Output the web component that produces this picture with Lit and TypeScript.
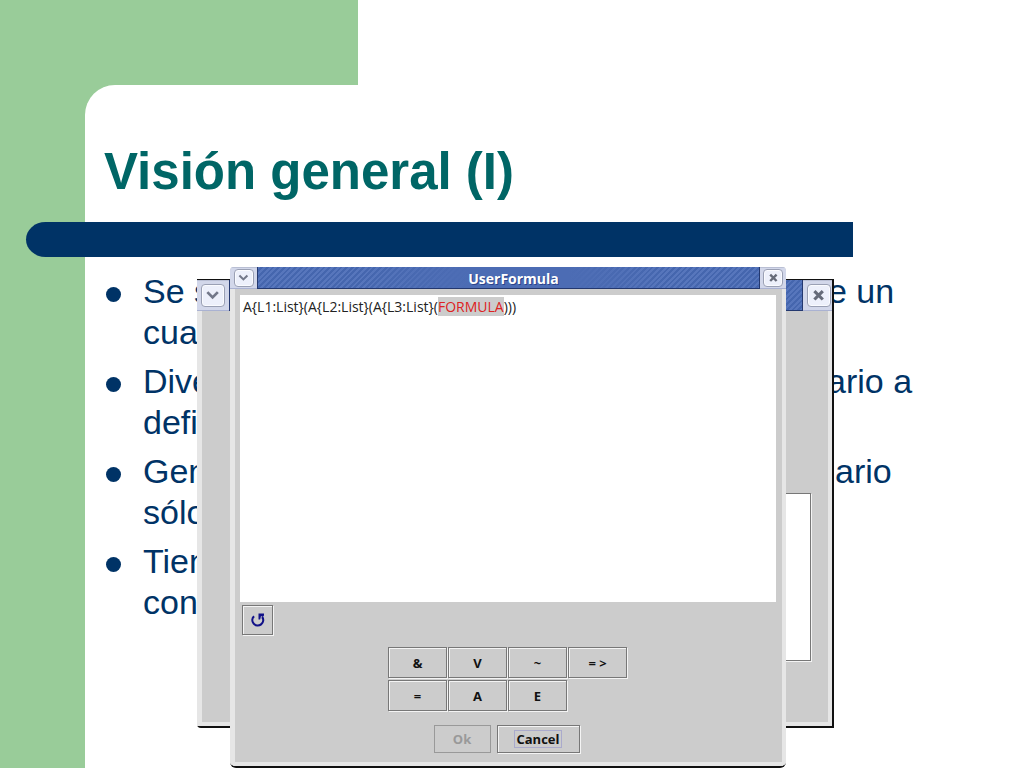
import { LitElement, html, css, svg } from "lit";
import { customElement, property } from "lit/decorators.js";

interface Point {
  start: string;
  gap: number;
  end: string;
  second: string;
}

const POINTS: Point[] = [
  { start: "Se s", gap: 685, end: "e un", second: "cua" },
  { start: "Dive", gap: 684, end: "ario a", second: "defi" },
  { start: "Gen", gap: 692, end: "ario", second: "sólo" },
  { start: "Tien", gap: 685, end: "", second: "con" },
];

const SYMBOLS = ["&", "V", "~", "= >", "=", "A", "E"];

@customElement("window-frame")
export class WindowFrame extends LitElement {
  @property() caption = "";

  static styles = css`
    :host {
      display: flex;
      flex-direction: column;
      box-sizing: border-box;
      background: #cccccc;
      font-family: "Open Sans", "Noto Sans", sans-serif;
    }
    .bar {
      display: flex;
      align-items: stretch;
      height: var(--bar-height, 22px);
      background: #d2d7ea;
      box-shadow: inset 0 1px #b9bfd4, inset 0 -1px #aab2d2;
    }
    .corner {
      display: flex;
      align-items: center;
      justify-content: center;
      width: var(--corner-width, 27px);
    }
    .corner.right {
      justify-content: flex-end;
      box-sizing: border-box;
      padding-right: var(--corner-inset, 3px);
      width: var(--right-width, 26px);
    }
    .control {
      display: flex;
      align-items: center;
      justify-content: center;
      width: var(--control-width, 20px);
      height: var(--control-height, 18px);
      padding: 0;
      border: 1px solid #9aa0b4;
      border-radius: 4px;
      background: #edf0fb;
      box-shadow: inset 0 0 0 1px #fafbff;
    }
    .control svg {
      width: 60%;
      height: 60%;
    }
    .title {
      flex: 1;
      margin: 0;
      padding-left: 10px;
      text-align: center;
      color: #ffffff;
      font-size: 14px;
      line-height: 23px;
      font-weight: 700;
      text-shadow: 1px 1px #2c448c;
      border: solid #24386f;
      border-width: 0 1px 1px;
      background:
        linear-gradient(90deg, transparent 20%, #4c6cb4 42%, #4c6cb4 62%, transparent 82%),
        repeating-linear-gradient(135deg, #5776bc 0 2px, #4566ae 2px 4px);
      box-sizing: border-box;
    }
    .body {
      flex: 1;
      display: flex;
      flex-direction: column;
      border: solid #e6e6e6;
      border-width: 0 4px 4px 5px;
    }
  `;

  render() {
    return html`
      <div class="bar">
        <div class="corner">
          <button class="control" aria-label="Menu">
            ${svg`<svg viewBox="0 0 12 12" fill="none" stroke="#73788a" stroke-width="2.6"><path d="M1 3l5 5 5-5"/></svg>`}
          </button>
        </div>
        <h2 class="title">${this.caption}</h2>
        <div class="corner right">
          <button class="control" aria-label="Close">
            ${svg`<svg viewBox="0 0 12 12" fill="none" stroke="#666b7a" stroke-width="3"><path d="M2 2l8 8M10 2l-8 8"/></svg>`}
          </button>
        </div>
      </div>
      <div class="body"><slot></slot></div>
    `;
  }
}

@customElement("app-root")
export class AppRoot extends LitElement {
  static styles = css`
    :host {
      display: block;
      font-family: "Liberation Sans", Arial, sans-serif;
      color: #003366;
    }
    .slide {
      position: relative;
      display: flex;
      flex-direction: column;
      min-height: 100vh;
      overflow: hidden;
      background: linear-gradient(90deg, #99cc99 120px, #ffffff 120px);
    }
    .band {
      width: 35%;
      height: 85px;
      background: #99cc99;
    }
    .panel {
      flex: 1;
      margin-left: 85px;
      background: #ffffff;
      border-radius: 30px 0 0 0;
    }
    .heading {
      margin: 0;
      padding: 57px 0 20px 19px;
      font-size: 51px;
      line-height: 60px;
      font-weight: 700;
      color: #006666;
    }
    .rule {
      height: 35px;
      margin: 0 calc(100vw / 6) 0 -59px;
      border-radius: 20px 0 0 20px / 18px 0 0 18px;
      background: #003366;
    }
    .points {
      display: flex;
      flex-direction: column;
      gap: 8px;
      margin: 0;
      padding: 14px 0 0 21px;
      list-style: none;
      font-size: 34px;
      line-height: 41px;
    }
    .point {
      display: flex;
      align-items: flex-start;
      gap: 22px;
    }
    .dot {
      width: 15px;
      height: 15px;
      margin-top: 16px;
      border-radius: 50%;
      background: #003366;
    }
    .line {
      display: flex;
      white-space: nowrap;
    }
    .start {
      flex: none;
    }
    .back,
    .front {
      position: absolute;
    }
    .back {
      left: 197px;
      top: 279px;
      width: 637px;
      height: 449px;
      border: solid #111111;
      border-width: 1px 2px 2px 0;
      border-radius: 0 0 0 4px;
      --bar-height: 31px;
      --corner-width: 32px;
      --right-width: 29px;
      --corner-inset: 1px;
      --control-width: 24px;
      --control-height: 23px;
    }
    .front {
      left: 230px;
      top: 267px;
      width: 556px;
      border-bottom: 2px solid #111111;
      border-radius: 4px 4px 6px 6px;
      overflow: hidden;
    }
    .list {
      margin: 182px 17px 0 30px;
      height: 166px;
      border: 1px solid #777777;
      background: #ffffff;
      box-shadow: 1px 1px #f4f4f4;
    }
    .editor {
      margin: 6px 6px 0 5px;
      height: 307px;
      box-sizing: border-box;
      padding: 4px 3px;
      background: #ffffff;
      color: #222222;
      font-size: 14px;
      line-height: 16px;
      outline: none;
    }
    .chosen {
      background: #cccccc;
      color: #dd2222;
    }
    .tools {
      padding: 3px 7px 12px;
    }
    .key {
      display: flex;
      align-items: center;
      justify-content: center;
      padding: 0;
      border: 1px solid #777777;
      background: #cccccc;
      box-shadow: 1px 1px #f4f4f4, inset 1px 1px #f4f4f4;
      color: #111111;
      font-family: "Open Sans", "Noto Sans", sans-serif;
      font-size: 13px;
      line-height: 16px;
      font-weight: 700;
    }
    .undo {
      width: 31px;
      height: 30px;
    }
    .keys {
      display: grid;
      grid-template-columns: repeat(4, 59px);
      grid-auto-rows: 31px;
      gap: 2px 1px;
      justify-content: center;
      padding-right: 2px;
    }
    .actions {
      display: flex;
      justify-content: center;
      gap: 6px;
      padding: 14px 4px 9px 0;
    }
    .action {
      height: 28px;
    }
    .ok {
      width: 57px;
      color: #999999;
      border-color: #999999;
      box-shadow: none;
    }
    .cancel {
      width: 83px;
    }
    .focus {
      border: 1px solid #aaaacc;
      padding: 0 1px;
    }
  `;

  render() {
    return html`
      <main class="slide">
        <div class="band"></div>
        <section class="panel">
          <h1 class="heading">Visión general (I)</h1>
          <div class="rule"></div>
          <ul class="points">
            ${POINTS.map(
              (p) => html`
                <li class="point">
                  <span class="dot"></span>
                  <div>
                    <div class="line">
                      <span class="start" style="width:${p.gap}px">${p.start}</span>
                      <span>${p.end}</span>
                    </div>
                    <div class="line">${p.second}</div>
                  </div>
                </li>
              `
            )}
          </ul>
        </section>

        <window-frame class="back">
          <div class="list"></div>
        </window-frame>

        <window-frame class="front" caption="UserFormula">
          <div class="editor" contenteditable="true" role="textbox" aria-label="Formula" spellcheck="false">A{L1:List}(A{L2:List}(A{L3:List}(<span class="chosen">FORMULA</span>)))</div>
          <div class="tools">
            <button class="key undo" aria-label="Undo">
              <svg width="16" height="16" viewBox="0 0 16 16" fill="none" stroke="#111188" stroke-width="2.2">
                <path d="M4 4.2A5.4 5.4 0 1 0 12.2 5" />
                <path d="M8.5 1.5h5.5v2l-1.5 1.5-1.5-1-.8 3.5h-1.7z" fill="#111188" stroke="none" />
              </svg>
            </button>
          </div>
          <div class="keys">
            ${SYMBOLS.map((s) => html`<button class="key">${s}</button>`)}
          </div>
          <div class="actions">
            <button class="key action ok" disabled>Ok</button>
            <button class="key action cancel"><span class="focus">Cancel</span></button>
          </div>
        </window-frame>
      </main>
    `;
  }
}
